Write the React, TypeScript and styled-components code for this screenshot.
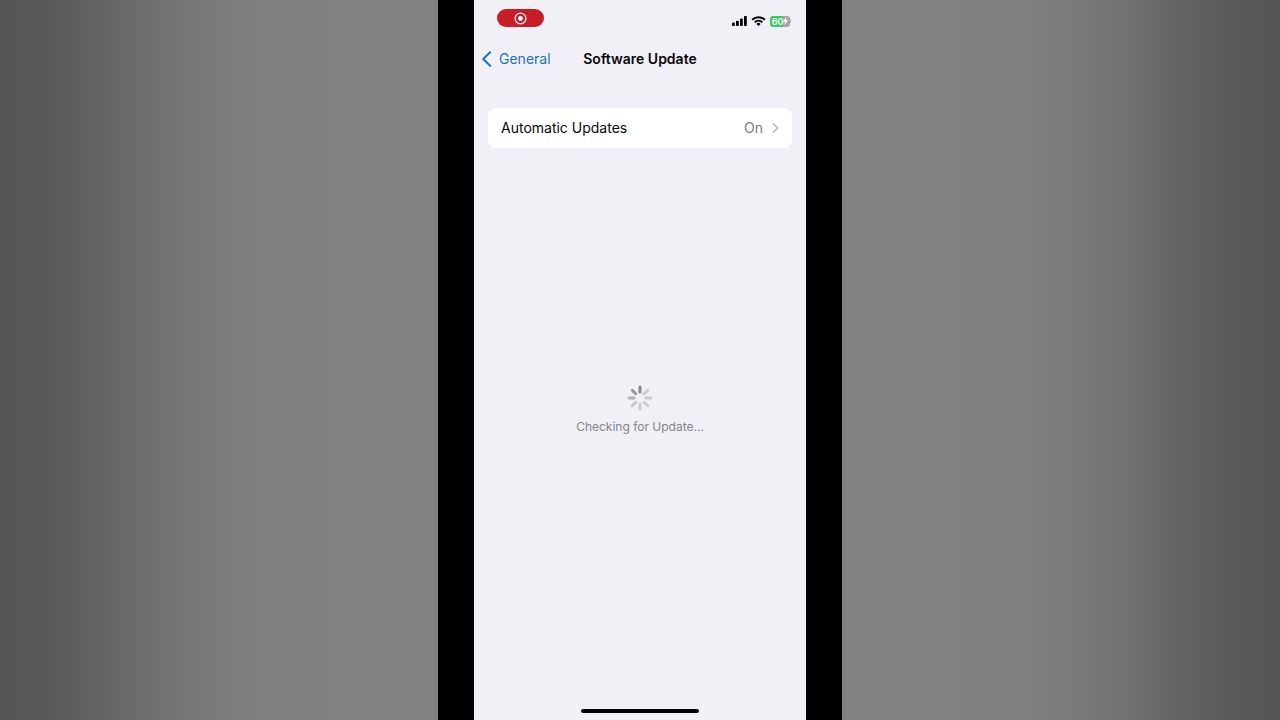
import React from "react";
import styled, { createGlobalStyle } from "styled-components";

const GlobalStyle = createGlobalStyle`
  *, *::before, *::after { box-sizing: border-box; }
  body {
    margin: 0;
    font-family: Inter, "Liberation Sans", sans-serif;
    color: #08080a;
  }
`;

const Backdrop = styled.div`
  display: flex;
  justify-content: center;
  min-height: 100vh;
  background: linear-gradient(
    to right,
    #555555 0%,
    #595959 4%,
    #646464 8%,
    #707070 12%,
    #79797a 16%,
    #7f7f80 20%,
    #828284 28%,
    #828284 72%,
    #808082 79%,
    #7a7a7b 84%,
    #717171 88%,
    #646464 92%,
    #5a5a5a 96%,
    #555556 100%
  );
`;

const Stage = styled.div`
  display: flex;
  width: 100%;
  max-width: 404px;
  padding: 0 36px;
  background: #000;
`;

const Screen = styled.div`
  display: flex;
  flex: 1;
  flex-direction: column;
  background: #f0f0f6;
`;

const StatusBar = styled.div`
  display: flex;
  align-items: center;
  justify-content: space-between;
  height: 40px;
  padding: 0 15px 0 23px;
`;

const RecordingButton = styled.button`
  display: flex;
  align-items: center;
  justify-content: center;
  width: 47px;
  height: 18px;
  margin-bottom: 4px;
  padding: 0;
  border: 0;
  border-radius: 9px;
  background: #c71d28;
`;

const StatusIcons = styled.div`
  display: flex;
  align-items: center;
  gap: 4px;
  padding-top: 2px;
`;

const Battery = styled.div`
  display: flex;
  align-items: center;

  &::after {
    content: "";
    width: 1px;
    height: 4px;
    background: #b9b9be;
  }
`;

const BatteryBody = styled.div`
  display: flex;
  align-items: center;
  justify-content: center;
  width: 20px;
  height: 11px;
  border-radius: 3px;
  background: linear-gradient(to right, #3fcb5c 65%, #a4a4a9 65%);
  color: #fff;
  font-size: 9px;
  font-weight: 600;
  line-height: 11px;
`;

const NavBar = styled.header`
  display: grid;
  grid-template-columns: 1fr auto 1fr;
  align-items: center;
  height: 38px;
  padding: 0 8px;
`;

const BackLink = styled.a`
  display: flex;
  align-items: center;
  gap: 7px;
  color: #1a73bd;
  font-size: 14px;
  line-height: 20px;
  text-decoration: none;
`;

const Title = styled.h1`
  margin: 0;
  font-size: 14px;
  font-weight: 600;
  line-height: 20px;
`;

const Settings = styled.main`
  display: flex;
  flex: 1;
  flex-direction: column;
  padding: 30px 14px 0;
`;

const SettingRow = styled.button`
  display: flex;
  align-items: center;
  width: 100%;
  height: 40px;
  padding: 0 13px;
  border: 0;
  border-radius: 8px;
  background: #fff;
  color: inherit;
  font-family: inherit;
  font-size: 14px;
  line-height: 20px;
  text-align: left;
`;

const SettingLabel = styled.span`
  flex: 1;
`;

const SettingValue = styled.span`
  margin-right: 9px;
  color: #7d7d81;
`;

const Progress = styled.div`
  display: flex;
  flex: 1;
  flex-direction: column;
  align-items: center;
  justify-content: center;
  gap: 6px;
  padding-bottom: 36px;
`;

const ProgressText = styled.p`
  margin: 0;
  color: #85858a;
  font-size: 12px;
  line-height: 20px;
`;

const HomeArea = styled.footer`
  display: flex;
  justify-content: center;
  padding-bottom: 7px;
`;

const HomeIndicator = styled.div`
  width: 118px;
  height: 4px;
  border-radius: 2px;
  background: #000;
`;

const SPOKES = ["#88888c", "#c9c9ce", "#c9c9ce", "#cbcbd0", "#cbcbd0", "#c3c3c8", "#aeaeb3", "#98989d"];

function RecordIcon() {
  return (
    <svg width="13" height="13" viewBox="0 0 13 13" aria-hidden="true">
      <circle cx="6.5" cy="6.5" r="5.4" fill="none" stroke="#fbe3e3" strokeWidth="1.3" />
      <circle cx="6.5" cy="6.5" r="2.4" fill="#fff" />
    </svg>
  );
}

function SignalIcon() {
  return (
    <svg width="15" height="10" viewBox="0 0 15 10" fill="#000" aria-hidden="true">
      <rect x="0" y="6.6" width="2.8" height="3.4" rx="0.8" />
      <rect x="4" y="4.7" width="2.8" height="5.3" rx="0.8" />
      <rect x="8" y="2.4" width="2.8" height="7.6" rx="0.8" />
      <rect x="12" y="0" width="2.8" height="10" rx="0.8" />
    </svg>
  );
}

function WifiIcon() {
  return (
    <svg width="15" height="10" viewBox="0 0 15 10" fill="none" stroke="#000" strokeWidth="2" aria-hidden="true">
      <path d="M1.2 3.7A9 9 0 0 1 13.8 3.7" />
      <path d="M3.7 6.3A5.5 5.5 0 0 1 11.3 6.3" />
      <path d="M7.5 10L5.4 7.9A3 3 0 0 1 9.6 7.9Z" fill="#000" stroke="none" />
    </svg>
  );
}

function BoltIcon() {
  return (
    <svg width="5" height="8" viewBox="0 0 5 8" aria-hidden="true">
      <path d="M3.2 0L0 4.6H2L1.6 8L5 3.3H2.8Z" fill="#fff" />
    </svg>
  );
}

function Spinner() {
  return (
    <svg width="26" height="26" viewBox="0 0 26 26" aria-hidden="true">
      {SPOKES.map((color, i) => (
        <line
          key={i}
          x1="13"
          y1="2"
          x2="13"
          y2="7"
          stroke={color}
          strokeWidth="3"
          strokeLinecap="round"
          transform={`rotate(${i * 45} 13 13)`}
        />
      ))}
    </svg>
  );
}

export default function App() {
  return (
    <>
      <GlobalStyle />
      <Backdrop>
        <Stage>
          <Screen>
            <StatusBar>
              <RecordingButton type="button" aria-label="Screen recording">
                <RecordIcon />
              </RecordingButton>
              <StatusIcons>
                <SignalIcon />
                <WifiIcon />
                <Battery>
                  <BatteryBody>
                    60
                    <BoltIcon />
                  </BatteryBody>
                </Battery>
              </StatusIcons>
            </StatusBar>
            <NavBar>
              <BackLink href="#general">
                <svg width="10" height="16" viewBox="0 0 10 16" fill="none" aria-hidden="true">
                  <path d="M8.2 1.2L1.2 8L8.2 14.8" stroke="#1a73bd" strokeWidth="2" strokeLinecap="round" strokeLinejoin="round" />
                </svg>
                General
              </BackLink>
              <Title>Software Update</Title>
            </NavBar>
            <Settings>
              <SettingRow type="button">
                <SettingLabel>Automatic Updates</SettingLabel>
                <SettingValue>On</SettingValue>
                <svg width="7" height="10" viewBox="0 0 7 10" fill="none" aria-hidden="true">
                  <path d="M1.2 0.8L5.6 5L1.2 9.2" stroke="#b4b4b8" strokeWidth="1.5" strokeLinecap="round" strokeLinejoin="round" />
                </svg>
              </SettingRow>
              <Progress role="status">
                <Spinner />
                <ProgressText>Checking for Update...</ProgressText>
              </Progress>
            </Settings>
            <HomeArea>
              <HomeIndicator />
            </HomeArea>
          </Screen>
        </Stage>
      </Backdrop>
    </>
  );
}
